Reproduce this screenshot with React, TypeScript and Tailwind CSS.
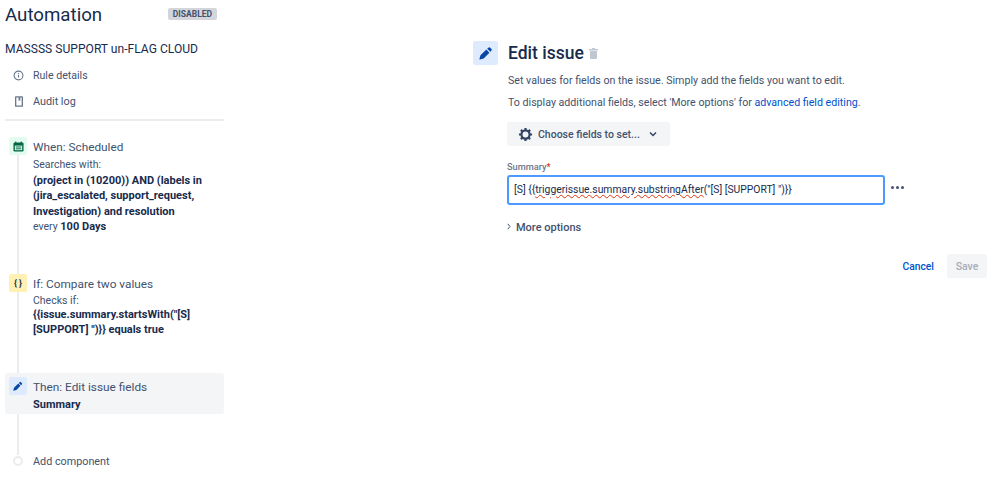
import React from "react";

const F = { fontFamily: 'Roboto, "Noto Sans", sans-serif' };

function Pencil({ size = 12 }: { size?: number }) {
  return (
    <svg width={size} height={size} viewBox="0 0 16 16" fill="#0747a6">
      <path d="M10.600 1.900a1.600 1.600 0 0 1 2.200 0l1.300 1.300a1.600 1.600 0 0 1 0 2.200L12.900 6.600 9.400 3.100zM8.400 4.100l3.500 3.500-6.600 6.600-4.300 1.200a.4.4 0 0 1-.5-.5l1.200-4.300z" />
    </svg>
  );
}

function Step({
  icon,
  iconBg,
  title,
  children,
  className = "",
}: {
  icon: React.ReactNode;
  iconBg: string;
  title: string;
  children: React.ReactNode;
  className?: string;
}) {
  return (
    <div className={`flex ${className}`}>
      <div className={`ml-[4px] flex h-[18px] w-[18px] shrink-0 items-center justify-center rounded-[2px] ${iconBg}`}>{icon}</div>
      <div className="ml-[6px] min-w-0">
        <div className="h-[18px] text-[11.8px] leading-[20px] text-[#42526e]">{title}</div>
        {children}
      </div>
    </div>
  );
}

export default function App() {
  return (
    <div style={F} className="flex h-[478px] w-[999px] overflow-hidden bg-white text-[#172b4d]">
      <aside className="relative ml-[5px] w-[219px] shrink-0">
        <div className="flex h-[31px] items-start justify-between pt-[3px]">
          <div className="text-[18.7px] leading-[25px] text-[#172b4d]">Automation</div>
          <div className="mr-[7px] mt-[5px] flex h-[12px] w-[49px] items-center justify-center rounded-[2px] bg-[#d3d5da] text-[8.5px] font-bold text-[#42526e]">DISABLED</div>
        </div>
        <div className="mt-[10px] text-[12.1px] leading-[16px] text-[#172b4d]">MASSSS SUPPORT un-FLAG CLOUD</div>
        <div className="mt-[10px] flex h-[16px] items-center text-[#42526e]">
          <svg className="ml-[8px]" width="11" height="11" viewBox="0 0 12 12" fill="none" stroke="#6b778c" strokeWidth="1.2">
            <circle cx="6" cy="6" r="4.800" />
            <path d="M6 5.300v3M6 3.400v1" />
          </svg>
          <span className="ml-[9px] pt-[2px] text-[10.6px] leading-[14px]">Rule details</span>
        </div>
        <div className="mt-[10px] flex h-[16px] items-center text-[#42526e]">
          <svg className="ml-[10px]" width="8" height="11" viewBox="0 0 9 12" fill="#6b778c">
            <path fillRule="evenodd" d="M1 0h7a1 1 0 0 1 1 1v10a1 1 0 0 1-1 1H1a1 1 0 0 1-1-1V1a1 1 0 0 1 1-1zm.5 1.500v9h6v-9H6v4l-1-.8-1 .8v-4z" />
          </svg>
          <span className="ml-[10px] pt-[2px] text-[10.8px] leading-[14px]">Audit log</span>
        </div>
        <div className="mt-[10px] h-[2px] bg-[#ebecf0]" />

        <div className="absolute left-[12px] top-[150px] h-[305px] w-[2px] bg-[#ebecf0]" />

        <div className="relative">
          <Step
            className="mt-[16px] h-[130px]"
            iconBg="bg-[#e3fcef]"
            title="When: Scheduled"
            icon={
              <svg width="11" height="11" viewBox="0 0 12 12">
                <rect x="0.500" y="1.500" width="11" height="10" rx="1.500" fill="#006644" />
                <rect x="2" y="5" width="8" height="5" fill="#e3fcef" />
                <path d="M3 0.500v2M9 0.500v2" stroke="#006644" strokeWidth="1.200" />
                <path d="M3 6.500h6M3 8.500h6" stroke="#006644" strokeWidth="1" />
              </svg>
            }
          >
            <div className="mt-[2px] text-[10.5px] leading-[15.5px] text-[#42526e]">Searches with:</div>
            <div className="text-[11px] font-bold leading-[15.5px] text-[#172b4d]">
              (project in (10200)) AND (labels in
              <br />
              (jira_escalated, support_request,
              <br />
              Investigation) and resolution
            </div>
            <div className="text-[10.5px] leading-[15px] text-[#42526e]">
              every <b className="text-[11px] text-[#172b4d]">100 Days</b>
            </div>
          </Step>

          <Step
            className="mt-[7px] h-[90px]"
            iconBg="bg-[#fff0b3]"
            title="If: Compare two values"
            icon={<span className="text-[9px] font-bold leading-none text-[#172b4d]">{"{ }"}</span>}
          >
            <div className="mt-[1px] text-[10.5px] leading-[15px] text-[#42526e]">Checks if:</div>
            <div className="text-[11px] font-bold leading-[14.5px] text-[#172b4d]">
              {'{{issue.summary.startsWith("[S]'}
              <br />
              {'[SUPPORT] ")}} equals true'}
            </div>
          </Step>

          <div className="mt-[9px] flex h-[41px] rounded-[3px] bg-[#f4f5f7] pt-[4px]">
            <div className="ml-[4px] flex h-[18px] w-[18px] shrink-0 items-center justify-center rounded-[2px] bg-[#deebff]">
              <Pencil size={10} />
            </div>
            <div className="ml-[6px]">
              <div className="h-[18px] text-[11.8px] leading-[21px] text-[#42526e]">Then: Edit issue fields</div>
              <div className="mt-[2px] text-[11px] font-bold leading-[15px] text-[#172b4d]">Summary</div>
            </div>
          </div>

          <div className="mt-[39px] flex h-[16px] items-center">
            <div className="ml-[8px] h-[10px] w-[10px] rounded-full border-2 border-[#ebecf0] bg-white" />
            <span className="ml-[10px] pt-[2px] text-[10.8px] leading-[14px] text-[#42526e]">Add component</span>
          </div>
        </div>
      </aside>

      <main className="ml-[249px] w-[514px] shrink-0 pt-[41px]">
        <div className="flex items-center">
          <div className="flex h-[24px] w-[25px] items-center justify-center rounded-[2px] bg-[#deebff]">
            <Pencil size={14} />
          </div>
          <h1 className="ml-[10px] text-[17.5px] font-medium leading-[24px] text-[#172b4d]">Edit issue</h1>
          <svg className="ml-[5px] mt-[1px]" width="9" height="11" viewBox="0 0 9 11" fill="#c1c7d0">
            <path d="M3 0h3v1h3v1.500H0V1h3zM1 3h7v7a1 1 0 0 1-1 1H2a1 1 0 0 1-1-1z" />
          </svg>
        </div>

        <div className="ml-[35px]">
          <p className="mt-[8px] text-[10.65px] leading-[16px] text-[#42526e]">Set values for fields on the issue. Simply add the fields you want to edit.</p>
          <p className="mt-[6px] text-[10.65px] leading-[16px] text-[#42526e]">
            To display additional fields, select 'More options' for <span className="text-[#0052cc]">advanced field editing</span>.
          </p>
          <div className="-ml-[1px] mt-[11px] flex h-[24px] w-[163px] items-center rounded-[3px] bg-[#f4f5f7] pl-[11px] text-[#42526e]">
            <svg width="15" height="15" viewBox="0 0 24 24" fill="none" stroke="#344563" strokeWidth="3.500">
              <circle cx="12" cy="12" r="6.500" />
              <path d="M12 1.500v4M12 18.500v4M1.500 12h4M18.500 12h4M4.600 4.600l2.800 2.800M16.600 16.600l2.800 2.800M4.600 19.400l2.800-2.800M16.600 7.400l2.800-2.800" />
            </svg>
            <span className="ml-[5px] pt-[2px] text-[10.5px] font-medium leading-[14px]">Choose fields to set...</span>
            <svg className="ml-[9px]" width="8" height="6" viewBox="0 0 8 6" fill="none" stroke="#344563" strokeWidth="1.500">
              <path d="M1 1.500l3 3 3-3" />
            </svg>
          </div>

          <div className="-ml-[1px] mt-[13px] h-[14px] text-[9.2px] font-medium leading-[15px] text-[#6b778c]">
            Summary<span className="text-[#de350b]">*</span>
          </div>
          <div className="-ml-[1px] mt-[2px] flex items-center">
            <div className="flex h-[30px] w-[378px] items-center rounded-[3px] border-2 border-[#4c9aff] bg-white pl-[5px] text-[10.35px] text-[#172b4d]">
              <span className="whitespace-pre">
                {"[S] {{"}
                <span className="underline decoration-[#de350b] decoration-wavy decoration-1 underline-offset-[1px]">triggerissue.summary.substringAfter</span>
                {'("[S] [SUPPORT] ")}}'}
              </span>
            </div>
            <div className="mb-[5px] ml-[6px] flex gap-[2px]">
              <span className="h-[3px] w-[3px] rounded-full bg-[#42526e]" />
              <span className="h-[3px] w-[3px] rounded-full bg-[#42526e]" />
              <span className="h-[3px] w-[3px] rounded-full bg-[#42526e]" />
            </div>
          </div>
          <div className="-ml-[1px] mt-[13px] flex h-[16px] items-center">
            <svg width="4" height="7" viewBox="0 0 4 7" fill="none" stroke="#42526e" strokeWidth="1">
              <path d="M0.700 0.800l2.300 2.700-2.300 2.700" />
            </svg>
            <span className="ml-[5px] pt-[3px] text-[11px] font-medium leading-[14px] text-[#42526e]">More options</span>
          </div>
          <div className="mt-[20px] flex items-center justify-end">
            <span className="pt-[2px] text-[10.3px] font-medium leading-[14px] text-[#0052cc]">Cancel</span>
            <div className="ml-[13px] flex h-[24px] w-[40px] items-center justify-center rounded-[3px] bg-[#f4f5f7] pt-[2px] text-[10.5px] font-medium text-[#a5adba]">Save</div>
          </div>
        </div>
      </main>
    </div>
  );
}
